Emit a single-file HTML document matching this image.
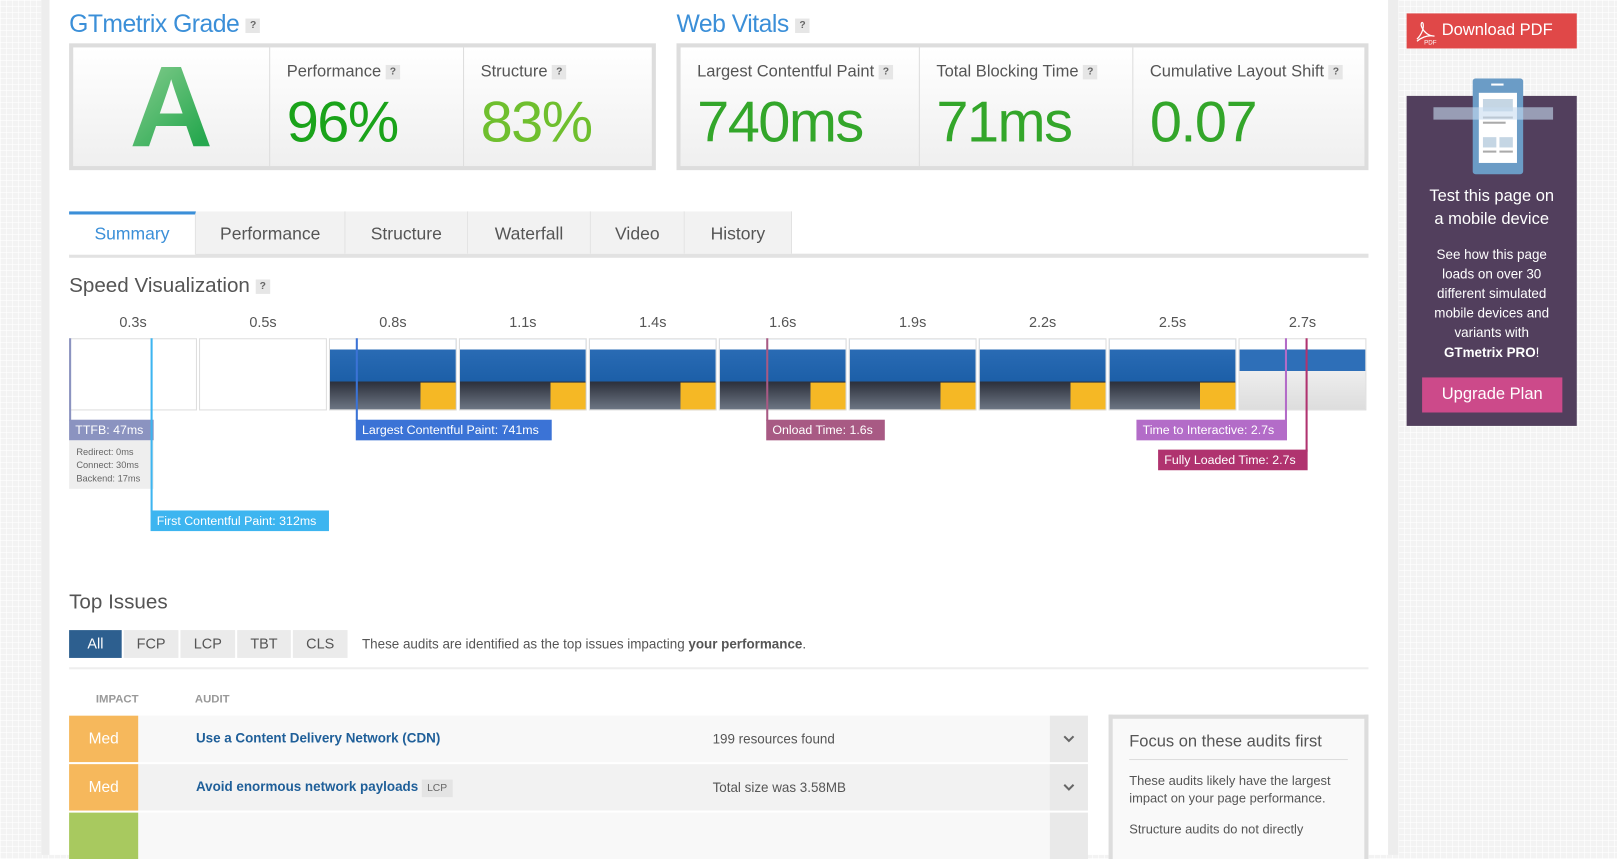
<!DOCTYPE html>
<html><head><meta charset="utf-8">
<style>
*{margin:0;padding:0;box-sizing:border-box}
body{width:1617px;height:829px;overflow:hidden;position:relative;font-family:"Liberation Sans",sans-serif;color:#555;
background-color:#f3f3f3;background-image:linear-gradient(rgba(255,255,255,.6) 1px,transparent 1px),linear-gradient(90deg,rgba(255,255,255,.6) 1px,transparent 1px);background-size:6px 6px}
#w{position:absolute;left:0;top:0;width:1568px;height:804px;transform:scale(1.03125);transform-origin:0 0}
.a{position:absolute}
.main{left:40px;top:0;width:1316px;height:829px;background:#fff;border-left:8px solid #ededed;border-right:10px solid #ededed}
.h{font-size:24px;color:#3b8fd8;letter-spacing:-0.5px}
.q{display:inline-block;width:14px;height:14px;background:#e6e6e6;color:#666;font-size:10px;text-align:center;line-height:14px;vertical-align:middle;font-weight:bold}
.box{border:4px solid #ddd;background:linear-gradient(#fff,#efefef);display:flex}
.cell{border-left:1px solid #ddd;padding:15px 0 0 16px;position:relative}
.cell:first-child{border-left:none}
.lbl{font-size:16px;color:#555}
.big{font-size:56px;margin-top:6px;letter-spacing:-1.5px}
.tab{position:absolute;top:205px;height:41px;background:#f2f2f2;border-right:1px solid #e2e2e2;font-size:17px;color:#555;text-align:center;line-height:43px}
.t{font-size:14px;color:#555;position:absolute;top:304px;text-align:center;width:60px}
.fr{position:absolute;top:328px;width:124px;height:70px;border:1px solid #ddd;background:#fff}
.shot{background:
linear-gradient(#fff 0,#fff 10px,transparent 10px),
linear-gradient(90deg,transparent 0,transparent 72%,#f5b825 72%) 0 42px/100% 60% no-repeat,
linear-gradient(#2e6fb8,#1c5fa8 60%,#2b2f3a 60%,#6d7684);}
.mk{position:absolute;width:2px}
.ml{position:absolute;height:20px;color:#fff;font-size:12px;line-height:20px;padding:0 6px;white-space:nowrap}
.fb{position:absolute;top:611px;height:27px;background:#ebebeb;color:#555;font-size:14px;text-align:center;line-height:27px}
.row{position:absolute;left:67px;width:988px;height:45px}
.med{position:absolute;left:0;top:0;width:67px;height:45px;background:#f6b85c;color:#fff;font-size:15px;text-align:center;line-height:45px}
.aud{position:absolute;left:123px;top:14px;font-size:13px;font-weight:bold;color:#1f5f99}
.det{position:absolute;left:624px;top:15px;font-size:13px;color:#555}
.chev{position:absolute;right:0;top:0;width:37px;height:45px;background:#e9e9e9}
.chev svg{position:absolute;left:13px;top:19px}
</style></head><body><div id="w">
<div class="a main"></div>

<div class="a h" style="left:67px;top:10px">GTmetrix Grade <span class="q">?</span></div>
<div class="a box" style="left:67px;top:42px;width:569px;height:123px">
 <div class="cell" style="width:190px;padding:0;text-align:center"><div style="font-size:112px;font-weight:bold;line-height:115px;background:linear-gradient(135deg,#b8e0b0,#27a84f 70%);-webkit-background-clip:text;color:transparent">A</div></div>
 <div class="cell" style="width:188px"><div class="lbl">Performance <span class="q">?</span></div><div class="big" style="color:#1aa31a">96%</div></div>
 <div class="cell" style="width:183px"><div class="lbl">Structure <span class="q">?</span></div><div class="big" style="color:#6fbf2e">83%</div></div>
</div>

<div class="a h" style="left:656px;top:10px">Web Vitals <span class="q">?</span></div>
<div class="a box" style="left:656px;top:42px;width:671px;height:123px">
 <div class="cell" style="width:231px"><div class="lbl">Largest Contentful Paint <span class="q">?</span></div><div class="big" style="color:#33a62a">740ms</div></div>
 <div class="cell" style="width:207px"><div class="lbl">Total Blocking Time <span class="q">?</span></div><div class="big" style="color:#33a62a">71ms</div></div>
 <div class="cell" style="width:225px"><div class="lbl">Cumulative Layout Shift <span class="q">?</span></div><div class="big" style="color:#33a62a">0.07</div></div>
</div>

<div class="a" style="left:67px;top:246px;width:1260px;height:4px;background:#e2e2e2"></div>
<div class="tab" style="left:67px;width:123px;background:#fff;border-top:3px solid #3b8fd8;color:#3b8fd8;line-height:38px;height:42px">Summary</div>
<div class="tab" style="left:190px;width:145px">Performance</div>
<div class="tab" style="left:335px;width:119px">Structure</div>
<div class="tab" style="left:454px;width:119px">Waterfall</div>
<div class="tab" style="left:573px;width:91px">Video</div>
<div class="tab" style="left:664px;width:104px">History</div>

<div class="a" style="left:67px;top:266px;font-size:20px;color:#555">Speed Visualization <span class="q">?</span></div>

<div class="t" style="left:99px">0.3s</div><div class="t" style="left:225px">0.5s</div><div class="t" style="left:351px">0.8s</div><div class="t" style="left:477px">1.1s</div><div class="t" style="left:603px">1.4s</div><div class="t" style="left:729px">1.6s</div><div class="t" style="left:855px">1.9s</div><div class="t" style="left:981px">2.2s</div><div class="t" style="left:1107px">2.5s</div><div class="t" style="left:1233px">2.7s</div>

<div class="fr" style="left:67px"></div>
<div class="fr" style="left:193px"></div>
<div class="fr shot" style="left:319px"></div>
<div class="fr shot" style="left:445px"></div>
<div class="fr shot" style="left:571px"></div>
<div class="fr shot" style="left:697px"></div>
<div class="fr shot" style="left:823px"></div>
<div class="fr shot" style="left:949px"></div>
<div class="fr shot" style="left:1075px"></div>
<div class="fr" style="left:1201px;background:linear-gradient(#fff 0,#fff 10px,#2e6fb8 10px,#2e6fb8 45%,#eee 45%,#ddd)"></div>

<div class="mk" style="left:67px;top:328px;height:80px;background:#8b93c0"></div>
<div class="ml" style="left:67px;top:407px;background:#8b93c0;width:82px">TTFB: 47ms</div>
<div class="a" style="left:67px;top:427px;width:82px;height:47px;background:#eee;font-size:9px;color:#666;padding:5px 0 0 7px;line-height:13px">Redirect: 0ms<br>Connect: 30ms<br>Backend: 17ms</div>
<div class="mk" style="left:146px;top:328px;height:168px;background:#3db5f0"></div>
<div class="ml" style="left:146px;top:495px;background:#3db5f0;width:173px">First Contentful Paint: 312ms</div>
<div class="mk" style="left:345px;top:328px;height:80px;background:#3b73d6"></div>
<div class="ml" style="left:345px;top:407px;background:#3b73d6;width:190px">Largest Contentful Paint: 741ms</div>
<div class="mk" style="left:743px;top:328px;height:80px;background:#a85a84"></div>
<div class="ml" style="left:743px;top:407px;background:#a85a84;width:115px">Onload Time: 1.6s</div>
<div class="mk" style="left:1246px;top:328px;height:80px;background:#b36cc8"></div>
<div class="ml" style="left:1102px;top:407px;background:#b36cc8;width:146px">Time to Interactive: 2.7s</div>
<div class="mk" style="left:1266px;top:328px;height:110px;background:#b0336f"></div>
<div class="ml" style="left:1123px;top:436px;background:#b0336f;width:145px">Fully Loaded Time: 2.7s</div>

<div class="a" style="left:67px;top:573px;font-size:20px;color:#555">Top Issues</div>
<div class="fb" style="left:67px;width:51px;background:#2d5f8f;color:#fff">All</div>
<div class="fb" style="left:120px;width:53px">FCP</div>
<div class="fb" style="left:175px;width:53px">LCP</div>
<div class="fb" style="left:230px;width:52px">TBT</div>
<div class="fb" style="left:284px;width:53px">CLS</div>
<div class="a" style="left:351px;top:617px;font-size:13px;color:#555">These audits are identified as the top issues impacting <b>your performance</b>.</div>
<div class="a" style="left:67px;top:647px;width:1260px;height:2px;background:#eee"></div>
<div class="a" style="left:93px;top:672px;font-size:11px;color:#999;font-weight:bold">IMPACT</div>
<div class="a" style="left:189px;top:672px;font-size:11px;color:#999;font-weight:bold">AUDIT</div>

<div class="row" style="top:694px;background:#f8f8f8"><div class="med">Med</div><div class="aud">Use a Content Delivery Network (CDN)</div><div class="det">199 resources found</div><div class="chev"><svg width="11" height="7" viewBox="0 0 11 7"><path d="M1 1l4.5 4.5L10 1" fill="none" stroke="#666" stroke-width="2"/></svg></div></div>
<div class="row" style="top:741px;background:#f2f2f2"><div class="med">Med</div><div class="aud">Avoid enormous network payloads <span style="background:#e4e4e4;color:#666;font-weight:normal;font-size:10px;padding:3px 5px">LCP</span></div><div class="det">Total size was 3.58MB</div><div class="chev"><svg width="11" height="7" viewBox="0 0 11 7"><path d="M1 1l4.5 4.5L10 1" fill="none" stroke="#666" stroke-width="2"/></svg></div></div>
<div class="row" style="top:788px;background:#f8f8f8"><div class="med" style="background:#a8c95f"></div><div class="chev"></div></div>

<div class="a" style="left:1075px;top:693px;width:252px;height:140px;border:4px solid #ddd;border-bottom:none;background:#f9f9f9;padding:14px 16px 0 16px">
 <div style="font-size:16px;color:#555;padding-bottom:7px;border-bottom:1px solid #ddd">Focus on these audits first</div>
 <div style="font-size:12.5px;color:#555;margin-top:12px;line-height:17px">These audits likely have the largest impact on your page performance.</div>
 <div style="font-size:12.5px;color:#555;margin-top:14px">Structure audits do not directly</div>
</div>

<div class="a" style="left:1364px;top:13px;width:165px;height:34px;background:#e04848;color:#fff;font-size:16px;line-height:34px;padding-left:34px">Download PDF</div>
<svg class="a" style="left:1371px;top:18px" width="24" height="26" viewBox="0 0 24 26"><path d="M3 20c4-4 7-10 6-15-1-3-3 0-1 4 2 4 6 8 12 8-5-1-11 0-17 5" fill="none" stroke="#fff" stroke-width="1.2"/><text x="10" y="25" font-size="6" fill="#fff" font-family="Liberation Sans">PDF</text></svg>

<div class="a" style="left:1364px;top:93px;width:165px;height:320px;background:#523f5d"></div>
<svg class="a" style="left:1428px;top:76px" width="50" height="95" viewBox="0 0 50 95"><rect x="0" y="0" width="49" height="93" rx="3" fill="#6b9cc6"/><rect x="6" y="14" width="37" height="68" fill="#fff"/><rect x="10" y="20" width="29" height="12" fill="#c5d6e4"/><rect x="10" y="37" width="29" height="2" fill="#aaa"/><rect x="10" y="42" width="22" height="2" fill="#aaa"/><rect x="10" y="57" width="13" height="10" fill="#c5d6e4"/><rect x="26" y="57" width="13" height="10" fill="#c5d6e4"/><rect x="10" y="70" width="13" height="2" fill="#aaa"/><rect x="26" y="70" width="13" height="2" fill="#aaa"/><rect x="18" y="5" width="12" height="2" fill="#fff"/></svg>
<div class="a" style="left:1390px;top:104px;width:116px;height:12px;background:rgba(200,220,240,.6)"></div>
<div class="a" style="left:1364px;top:180px;width:165px;text-align:center;color:#fff;font-size:16px;line-height:22px">Test this page on<br>a mobile device</div>
<div class="a" style="left:1364px;top:237px;width:165px;text-align:center;color:#fff;font-size:13px;line-height:19px">See how this page<br>loads on over 30<br>different simulated<br>mobile devices and<br>variants with<br><b>GTmetrix PRO</b>!</div>
<div class="a" style="left:1379px;top:366px;width:136px;height:34px;background:#cc4a8a;color:#fff;font-size:16px;text-align:center;line-height:34px">Upgrade Plan</div>
</div></body></html>
